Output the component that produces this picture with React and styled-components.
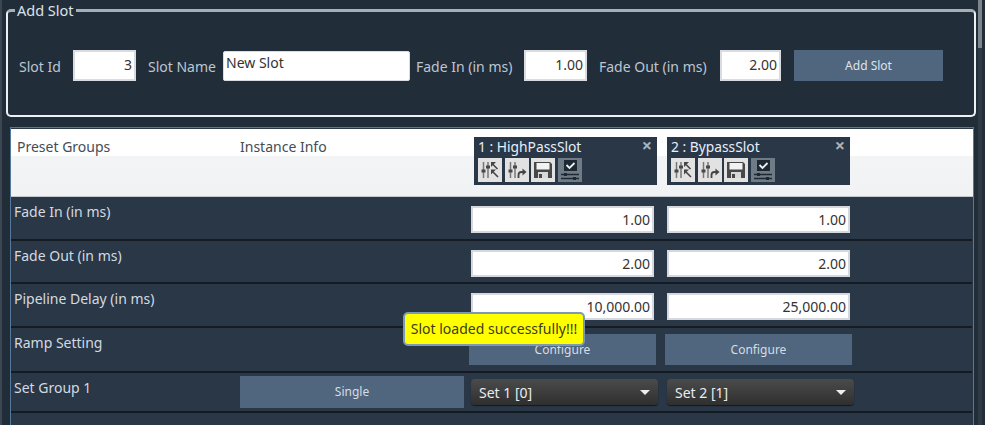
import React from 'react';
import styled, { createGlobalStyle } from 'styled-components';

const GlobalStyle = createGlobalStyle`
  html, body {
    margin: 0;
    padding: 0;
    background: #222d3a;
    overflow: hidden;
  }
`;

const FONT = `"Noto Sans", "Open Sans", sans-serif`;

function SlidersArrowsIcon() {
  return (
    <svg width='22' height='22' viewBox='0 0 22 22'>
      <path d='M4.5 3v16M9 3v16' stroke='#777' strokeWidth='1.5' />
      <path d='M2.5 12h4M7 8h4' stroke='#484848' strokeWidth='3' />
      <path d='M18.5 10 14 5.5' fill='none' stroke='#444' strokeWidth='1.6' />
      <path d='M12 3h5l-5 5z' fill='#444' />
      <path d='M19 18l-5-5' fill='none' stroke='#444' strokeWidth='1.6' />
      <path d='M12 10.5h5l-5 5z' fill='#444' />
    </svg>
  );
}

function SlidersExportIcon() {
  return (
    <svg width='22' height='22' viewBox='0 0 22 22'>
      <path d='M4.5 3v16M9 3v16' stroke='#777' strokeWidth='1.5' />
      <path d='M2.5 12h4M7 8h4' stroke='#484848' strokeWidth='3' />
      <path d='M12.5 19v-3q0-3 3-3h2' fill='none' stroke='#444' strokeWidth='1.8' />
      <path d='M16.5 9.5l4 3.5-4 3.5z' fill='#444' />
    </svg>
  );
}

function SaveIcon() {
  return (
    <svg width='22' height='22' viewBox='0 0 22 22'>
      <path d='M2 3h16l2 2v14H2z' fill='#484848' />
      <rect x='4.5' y='4' width='13' height='6.5' fill='#f2f2f2' />
      <rect x='6' y='13' width='10' height='6' fill='#d8d8d8' />
      <rect x='7' y='15' width='3' height='4' fill='#484848' />
    </svg>
  );
}

function ApplyIcon() {
  return (
    <svg width='24' height='24' viewBox='0 0 24 24'>
      <rect x='6' y='2' width='13' height='11' fill='#1e2833' />
      <path d='M8.5 7l3 3 5-5' fill='none' stroke='#eceff2' strokeWidth='1.8' />
      <path d='M3 16.5h18M3 20.5h18' stroke='#1e2833' strokeWidth='1.3' />
      <rect x='6' y='15' width='3' height='3' fill='#1e2833' />
      <rect x='15' y='19' width='3' height='3' fill='#1e2833' />
    </svg>
  );
}

const slots = [
  { id: 1, name: 'HighPassSlot' },
  { id: 2, name: 'BypassSlot' },
];

const inputRows = [
  { label: 'Fade In (in ms)', values: ['1.00', '1.00'], height: 44 },
  { label: 'Fade Out (in ms)', values: ['2.00', '2.00'], height: 43 },
  { label: 'Pipeline Delay (in ms)', values: ['10,000.00', '25,000.00'], height: 44 },
];

function App() {
  return (
    <Page>
      <GlobalStyle />
      <SideRail />
      <Content>
        <AddSlotBox>
          <Legend>Add Slot</Legend>
          <FormRow>
            <FormLabel $w={54}>Slot Id</FormLabel>
            <NumberBox $w={63}>3</NumberBox>
            <FormLabel $w={75} $ml={12}>Slot Name</FormLabel>
            <NameBox>New Slot</NameBox>
            <FormLabel $w={108} $ml={6}>Fade In (in ms)</FormLabel>
            <NumberBox $w={63}>1.00</NumberBox>
            <FormLabel $w={121} $ml={12}>Fade Out (in ms)</FormLabel>
            <NumberBox $w={61}>2.00</NumberBox>
            <AddButton>Add Slot</AddButton>
          </FormRow>
        </AddSlotBox>

        <TablePanel>
          <HeaderRow>
            <HeaderLabel>Preset Groups</HeaderLabel>
            <HeaderLabel>Instance Info</HeaderLabel>
            <SlotCards>
              {slots.map((slot) => (
                <SlotCard key={slot.id}>
                  <SlotTitle>
                    <span>{slot.id} : {slot.name}</span>
                    <CloseMark>×</CloseMark>
                  </SlotTitle>
                  <IconRow>
                    <IconTile><SlidersArrowsIcon /></IconTile>
                    <IconTile><SlidersExportIcon /></IconTile>
                    <IconTile><SaveIcon /></IconTile>
                    <IconTile $dark><ApplyIcon /></IconTile>
                  </IconRow>
                </SlotCard>
              ))}
            </SlotCards>
          </HeaderRow>

          {inputRows.map((row) => (
            <Row key={row.label} $h={row.height}>
              <RowLabel>{row.label}</RowLabel>
              <span />
              {row.values.map((value, i) => (
                <ValueBox key={i}>{value}</ValueBox>
              ))}
            </Row>
          ))}

          <Row $h={45}>
            <RowLabel>Ramp Setting</RowLabel>
            <span />
            <ConfigureButton>Configure</ConfigureButton>
            <ConfigureButton>Configure</ConfigureButton>
          </Row>

          <Row $h={40}>
            <RowLabel>Set Group 1</RowLabel>
            <SingleButton>Single</SingleButton>
            <Dropdown>Set 1 [0]<Caret /></Dropdown>
            <Dropdown>Set 2 [1]<Caret /></Dropdown>
          </Row>

          <Toast>Slot loaded successfully!!!</Toast>
        </TablePanel>
      </Content>
      <ScrollTrack>
        <ScrollThumb />
      </ScrollTrack>
    </Page>
  );
}

const Page = styled.div`
  position: relative;
  display: flex;
  width: 985px;
  height: 425px;
  overflow: hidden;
  background: #222d3a;
  font-family: ${FONT};
`;

const SideRail = styled.div`
  width: 2px;
  flex: none;
  background: #3d4753;
`;

const Content = styled.div`
  display: flex;
  flex-direction: column;
  padding: 0 0 0 4px;
`;

const AddSlotBox = styled.fieldset`
  box-sizing: border-box;
  width: 970px;
  height: 117px;
  margin: 0;
  padding: 0 0 0 11px;
  border: 2px solid #eef1f3;
  border-top: 3px solid #a7afb6;
  border-radius: 5px;
`;

const Legend = styled.legend`
  margin-left: -4px;
  padding: 0 2px;
  font-size: 14.5px;
  line-height: 21px;
  color: #dbe2e8;
`;

const FormRow = styled.div`
  display: flex;
  align-items: center;
  margin-top: 29px;
`;

const FormLabel = styled.span`
  width: ${(p) => p.$w}px;
  margin-left: ${(p) => p.$ml || 0}px;
  padding-top: 2px;
  flex: none;
  font-size: 14px;
  color: #bcc6d0;
  white-space: nowrap;
`;

const NumberBox = styled.div`
  box-sizing: border-box;
  width: ${(p) => p.$w}px;
  height: 31px;
  flex: none;
  padding: 0 2px;
  border: 2px solid #d9dde1;
  background: #fff;
  font-size: 14px;
  line-height: 25px;
  text-align: right;
  color: #333;
`;

const NameBox = styled.div`
  box-sizing: border-box;
  width: 187px;
  height: 30px;
  flex: none;
  padding: 0 2px;
  border: 1px solid #d9dde1;
  border-radius: 2px;
  background: #fff;
  font-size: 14px;
  line-height: 21px;
  color: #333;
`;

const AddButton = styled.div`
  width: 149px;
  height: 31px;
  margin-left: 13px;
  flex: none;
  background: #50667e;
  font-size: 12px;
  line-height: 31px;
  text-align: center;
  color: #dde4ea;
`;

const TablePanel = styled.div`
  position: relative;
  box-sizing: border-box;
  width: 964px;
  height: 298px;
  margin: 10px 0 0 4px;
  border: 1px solid #56789a;
  border-bottom: none;
  background: #2a3746;
  padding-top: 1px;
`;

const HeaderRow = styled.div`
  display: grid;
  grid-template-columns: 223px 234px 1fr;
  height: 68px;
  padding-left: 6px;
  background: linear-gradient(#fff 0, #fff 27px, #f3f4f6 27px, #f1f2f4 100%);
  border-bottom: 1px solid #c4c8cc;
  box-sizing: border-box;
`;

const HeaderLabel = styled.div`
  padding-top: 8px;
  font-size: 14px;
  line-height: 19px;
  color: #444c55;
`;

const SlotCards = styled.div`
  display: flex;
  gap: 10px;
  padding: 8px 0 0 0;
`;

const SlotCard = styled.div`
  box-sizing: border-box;
  width: 183px;
  height: 48px;
  padding: 0 4px;
  background: #2a3746;
`;

const SlotTitle = styled.div`
  display: flex;
  justify-content: space-between;
  height: 21px;
  font-size: 13.8px;
  line-height: 19px;
  color: #e6f0fa;
`;

const CloseMark = styled.span`
  margin-right: 1px;
  font-size: 18px;
  line-height: 17px;
  font-weight: 700;
  color: #a9b2ba;
`;

const IconRow = styled.div`
  display: flex;
  gap: 2.6px;
`;

const IconTile = styled.div`
  display: flex;
  align-items: center;
  justify-content: center;
  width: 24px;
  height: 24px;
  background: ${(p) => (p.$dark ? '#6f7c87' : '#e2e2e2')};
`;

const Row = styled.div`
  box-sizing: border-box;
  display: grid;
  grid-template-columns: 229px 229px 196px 196px;
  height: ${(p) => p.$h}px;
  border-bottom: 2px solid #141b23;
  margin-right: 1px;
`;

const RowLabel = styled.div`
  padding: 5px 0 0 3px;
  font-size: 14px;
  line-height: 19px;
  color: #d3dae1;
`;

const ValueBox = styled.div`
  box-sizing: border-box;
  width: 183px;
  height: 27px;
  margin: 9px 0 0 2px;
  padding: 0 2px;
  border: 2px solid #d5d9dd;
  background: #fff;
  font-size: 14px;
  line-height: 23px;
  text-align: right;
  color: #333;
`;

const ConfigureButton = styled.div`
  width: 187px;
  height: 31px;
  margin-top: 6px;
  background: #50667e;
  font-size: 12px;
  line-height: 31px;
  text-align: center;
  color: #d5dde5;
`;

const SingleButton = styled(ConfigureButton)`
  width: 224px;
  height: 32px;
  margin-top: 3px;
`;

const Dropdown = styled.div`
  box-sizing: border-box;
  display: flex;
  align-items: center;
  justify-content: space-between;
  width: 187px;
  height: 26px;
  margin: 6px 0 0 2px;
  padding: 0 8px;
  border-radius: 4px;
  background: linear-gradient(#4b4b4b, #2f2f2f);
  box-shadow: 0 1px 1px #171717;
  font-size: 14px;
  color: #e8ecf0;
`;

const Caret = styled.span`
  width: 0;
  height: 0;
  border-left: 5px solid transparent;
  border-right: 5px solid transparent;
  border-top: 5px solid #eee;
`;

const Toast = styled.div`
  position: absolute;
  left: 392px;
  top: 184px;
  box-sizing: border-box;
  width: 182px;
  height: 34px;
  border: 2px solid #7d9ab5;
  border-radius: 5px;
  background: #ffff00;
  font-size: 14px;
  line-height: 29px;
  text-align: center;
  color: #3c3c18;
  white-space: nowrap;
`;

const ScrollTrack = styled.div`
  position: absolute;
  top: 0;
  right: 3px;
  bottom: 0;
  width: 4px;
  background: #2f3944;
`;

const ScrollThumb = styled.div`
  height: 48px;
  background: #7c848c;
`;

export default App;
